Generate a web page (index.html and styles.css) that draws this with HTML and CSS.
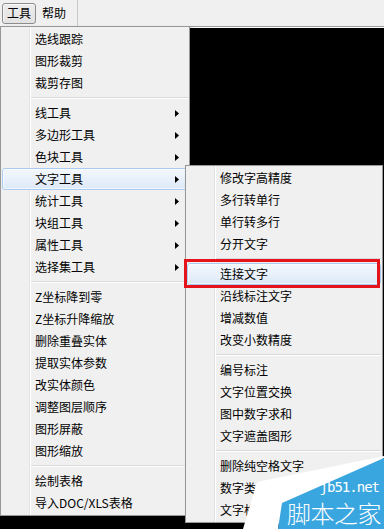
FILE: index.html
```html
<!DOCTYPE html>
<html lang="zh-CN">
<head>
<meta charset="utf-8">
<title>工具菜单</title>
<link rel="stylesheet" href="styles.css">
</head>
<body>
<div class="menubar">
  <span class="mb-item active">工具</span>
  <span class="mb-item">帮助</span>
  <span class="mb-end"></span>
</div>
<div class="canvas"></div>

<div class="menu main">
  <div class="item">选线跟踪</div>
  <div class="item">图形裁剪</div>
  <div class="item">裁剪存图</div>
  <div class="sep"></div>
  <div class="item">线工具<svg class="arrow" width="4" height="7" viewBox="0 0 4 7"><polygon points="0,0 4,3.5 0,7"/></svg></div>
  <div class="item">多边形工具<svg class="arrow" width="4" height="7" viewBox="0 0 4 7"><polygon points="0,0 4,3.5 0,7"/></svg></div>
  <div class="item">色块工具<svg class="arrow" width="4" height="7" viewBox="0 0 4 7"><polygon points="0,0 4,3.5 0,7"/></svg></div>
  <div class="item hl">文字工具<svg class="arrow" width="4" height="7" viewBox="0 0 4 7"><polygon points="0,0 4,3.5 0,7"/></svg></div>
  <div class="item">统计工具<svg class="arrow" width="4" height="7" viewBox="0 0 4 7"><polygon points="0,0 4,3.5 0,7"/></svg></div>
  <div class="item">块组工具<svg class="arrow" width="4" height="7" viewBox="0 0 4 7"><polygon points="0,0 4,3.5 0,7"/></svg></div>
  <div class="item">属性工具<svg class="arrow" width="4" height="7" viewBox="0 0 4 7"><polygon points="0,0 4,3.5 0,7"/></svg></div>
  <div class="item">选择集工具<svg class="arrow" width="4" height="7" viewBox="0 0 4 7"><polygon points="0,0 4,3.5 0,7"/></svg></div>
  <div class="sep"></div>
  <div class="item">Z坐标降到零</div>
  <div class="item">Z坐标升降缩放</div>
  <div class="item">删除重叠实体</div>
  <div class="item">提取实体参数</div>
  <div class="item">改实体颜色</div>
  <div class="item">调整图层顺序</div>
  <div class="item">图形屏蔽</div>
  <div class="item">图形缩放</div>
  <div class="sep"></div>
  <div class="item">绘制表格</div>
  <div class="item">导入DOC/XLS表格</div>
</div>

<div class="menu sub">
  <div class="item">修改字高精度</div>
  <div class="item">多行转单行</div>
  <div class="item">单行转多行</div>
  <div class="item">分开文字</div>
  <div class="sep"></div>
  <div class="item hl">连接文字</div>
  <div class="item">沿线标注文字</div>
  <div class="item">增减数值</div>
  <div class="item">改变小数精度</div>
  <div class="sep"></div>
  <div class="item">编号标注</div>
  <div class="item">文字位置交换</div>
  <div class="item">图中数字求和</div>
  <div class="item">文字遮盖图形</div>
  <div class="sep"></div>
  <div class="item">删除纯空格文字</div>
  <div class="item">数字类型转换</div>
  <div class="item">文字格式统一</div>
</div>

<div class="redbox"></div>

<div class="watermark">
  <svg class="wm-shape" width="150" height="79" viewBox="0 0 150 79">
    <polygon class="wm-white" points="23,32 150,6 150,8 48,53 44,79 9,79"/>
    <polygon class="wm-blue" points="150,8 150,79 44,79 48,53"/>
  </svg>
  <div class="wm-text">
    <span class="wm-url">jb51.net</span>
    <span class="wm-name">脚本之家</span>
  </div>
</div>
</body>
</html>
```

FILE: styles.css
```css
html, body {
  margin: 0;
  padding: 0;
}
body {
  position: relative;
  width: 384px;
  height: 529px;
  overflow: hidden;
  background: #f0f0f0;
  font-family: "Noto Sans CJK SC", "Microsoft YaHei", sans-serif;
  font-size: 12px;
  color: #000;
}

/* menu bar */
.menubar {
  height: 26px;
  display: flex;
  align-items: center;
  gap: 1px;
  padding-left: 2px;
  box-sizing: border-box;
  background: #f0f0f0;
}
.mb-item {
  height: 21px;
  box-sizing: border-box;
  padding: 0 4px;
  border: 1px solid transparent;
  border-radius: 3px;
  display: flex;
  align-items: center;
  line-height: 1;
}
.mb-item.active {
  border-color: #8d8d8d;
  background: linear-gradient(#ececec, #e2e2e2);
  box-shadow: inset 0 1px 0 #fafafa, inset 1px 0 0 #f6f6f6;
}
.mb-end {
  align-self: stretch;
  width: 1px;
  margin-left: 5px;
  background: #c9c9c9;
}

/* black drawing area */
.canvas {
  height: 503px;
  box-sizing: border-box;
  background: #000;
  border-top: 1px solid #9c9c9c;
  box-shadow: inset 0 1px 0 #ffffff;
}

/* popup menus */
.menu {
  position: absolute;
  box-sizing: border-box;
  border: 1px solid #979797;
  padding: 1px;
  background-color: #f0f0f0;
  background-image: linear-gradient(to right,
    transparent 28px, #e2e3e3 28px, #e2e3e3 29px,
    #ffffff 29px, #ffffff 30px, transparent 30px);
  box-shadow: 2px 2px 3px rgba(0, 0, 0, 0.35);
}
.main {
  left: 0;
  top: 26px;
  width: 190px;
}
.sub {
  left: 185px;
  top: 165px;
  width: 198px;
}
.item {
  height: 22px;
  box-sizing: border-box;
  display: flex;
  align-items: center;
  padding-left: 32px;
  border: 1px solid transparent;
  border-radius: 3px;
  white-space: nowrap;
  line-height: 1;
}
.item.hl {
  border-color: #aacbf2;
  background: linear-gradient(#f4f8fd, #dde9f8);
  box-shadow: inset 0 0 0 1px rgba(255, 255, 255, 0.6);
}
.arrow {
  margin-left: auto;
  margin-right: 8px;
  fill: #000;
}
.sep {
  height: 8px;
  display: flex;
  align-items: center;
}
.sep::after {
  content: "";
  flex: 1;
  margin-left: 29px;
  height: 1px;
  background: #d9d9d9;
  border-bottom: 1px solid #ffffff;
}

/* annotation box */
.redbox {
  position: absolute;
  left: 184px;
  top: 259px;
  width: 196px;
  height: 29px;
  box-sizing: border-box;
  border: 3px solid #e5141b;
}

/* watermark */
.watermark {
  position: absolute;
  left: 234px;
  top: 450px;
  width: 150px;
  height: 79px;
}
.wm-shape {
  display: block;
}
.wm-white {
  fill: #ffffff;
}
.wm-blue {
  fill: #3aa6df;
}
.wm-text {
  position: absolute;
  left: 53px;
  top: 30px;
  display: flex;
  flex-direction: column;
  align-items: flex-end;
  gap: 8px;
  color: #fff;
}
.wm-url {
  font-family: "DejaVu Sans Mono", monospace;
  font-size: 14px;
  letter-spacing: -1px;
  line-height: 14px;
  margin-right: 2px;
}
.wm-name {
  font-family: "Noto Sans CJK SC", sans-serif;
  font-size: 24px;
  font-weight: 300;
  line-height: 22px;
  letter-spacing: -0.5px;
}
```
